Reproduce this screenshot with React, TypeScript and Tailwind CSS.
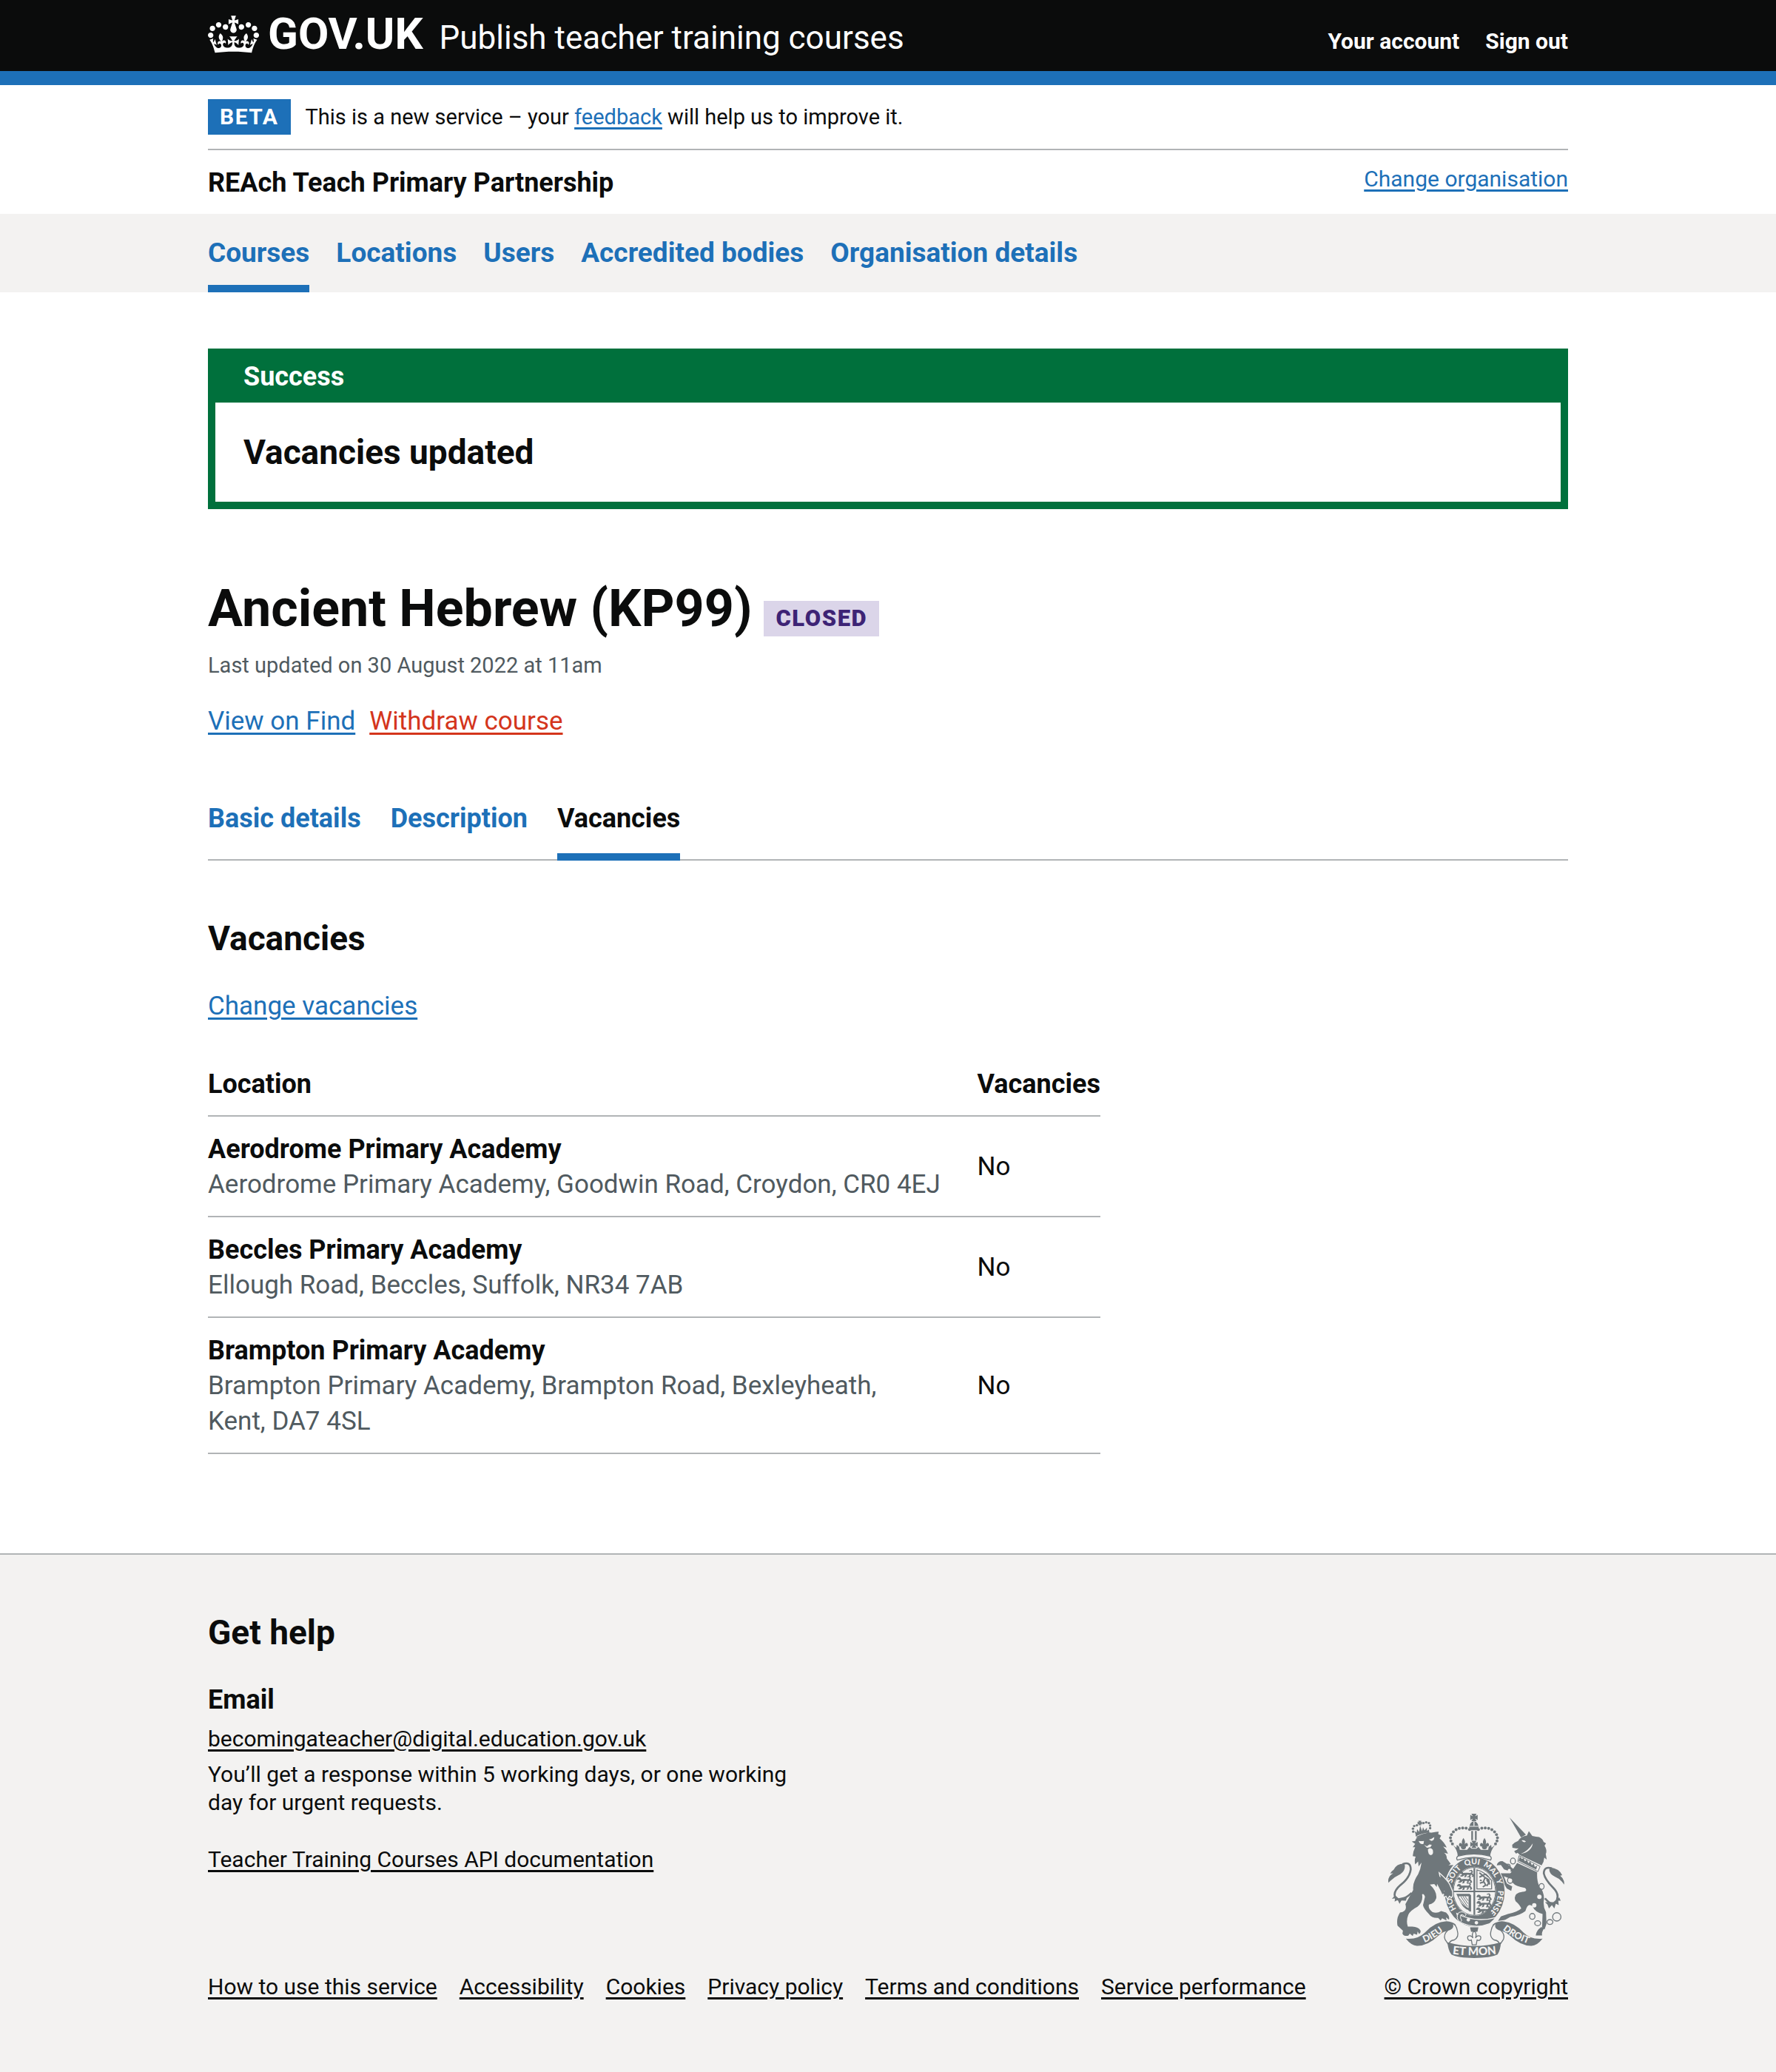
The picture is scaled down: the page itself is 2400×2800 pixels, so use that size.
import type { ReactNode } from "react";

const CONTAINER = "mx-auto w-full max-w-[1838px]";
const LINK = "underline decoration-[3px] underline-offset-[4px]";

const sections = ["Courses", "Locations", "Users", "Accredited bodies", "Organisation details"];
const tabs = ["Basic details", "Description", "Vacancies"];
const footerLinks = [
  "How to use this service",
  "Accessibility",
  "Cookies",
  "Privacy policy",
  "Terms and conditions",
  "Service performance",
];

const locations: { name: string; address: ReactNode; vacancies: string }[] = [
  {
    name: "Aerodrome Primary Academy",
    address: "Aerodrome Primary Academy, Goodwin Road, Croydon, CR0 4EJ",
    vacancies: "No",
  },
  { name: "Beccles Primary Academy", address: "Ellough Road, Beccles, Suffolk, NR34 7AB", vacancies: "No" },
  {
    name: "Brampton Primary Academy",
    address: (
      <>
        Brampton Primary Academy, Brampton Road, Bexleyheath, <span className="whitespace-nowrap">Kent, DA7 4SL</span>
      </>
    ),
    vacancies: "No",
  },
];

function Crown() {
  return (
    <svg aria-hidden="true" viewBox="0 0 132 97" className="h-[51px] w-[69px] shrink-0 self-center fill-white">
      <path
        fillRule="evenodd"
        d="M25 30.2c3.5 1.5 7.7-.2 9.1-3.7 1.5-3.6-.2-7.8-3.9-9.2-3.6-1.4-7.6.3-9.1 3.9-1.4 3.5.3 7.5 3.9 9zM9 39.5c3.6 1.5 7.8-.2 9.2-3.7 1.5-3.6-.2-7.8-3.9-9.1-3.6-1.5-7.6.2-9.1 3.8-1.4 3.5.3 7.5 3.8 9zM4.4 57.2c3.5 1.5 7.7-.2 9.1-3.8 1.5-3.6-.2-7.7-3.9-9.1-3.5-1.5-7.6.3-9.1 3.8-1.4 3.5.3 7.6 3.9 9.1zm38.3-21.4c3.5 1.5 7.7-.2 9.1-3.8 1.5-3.6-.2-7.7-3.9-9.1-3.6-1.5-7.6.3-9.1 3.8-1.3 3.6.4 7.7 3.9 9.1zm64.4-5.6c-3.6 1.5-7.8-.2-9.1-3.7-1.5-3.6.2-7.8 3.8-9.2 3.6-1.4 7.7.3 9.2 3.9 1.3 3.5-.4 7.5-3.9 9zm15.9 9.3c-3.6 1.5-7.7-.2-9.1-3.7-1.5-3.6.2-7.8 3.7-9.1 3.6-1.5 7.7.2 9.2 3.8 1.5 3.5-.3 7.5-3.8 9zm4.7 17.7c-3.6 1.5-7.8-.2-9.2-3.8-1.5-3.6.2-7.7 3.9-9.1 3.6-1.5 7.7.3 9.2 3.8 1.3 3.5-.4 7.6-3.9 9.1zM89.3 35.8c-3.6 1.5-7.8-.2-9.2-3.8-1.4-3.6.2-7.7 3.9-9.1 3.6-1.5 7.7.3 9.2 3.8 1.4 3.6-.3 7.7-3.9 9.1zM69.7 17.7l8.9 4.7V9.3l-8.9 2.8c-.2-.3-.5-.6-.9-.9L72.4 0H59.6l3.5 11.2c-.3.3-.6.5-.9.9l-8.8-2.8v13.1l8.8-4.7c.3.3.6.7.9.9l-5 15.4v.1c-.2.8-.4 1.6-.4 2.4 0 4.1 3.1 7.5 7 8.1h.2c.3 0 .7.1 1 .1.4 0 .7 0 1-.1h.2c4-.6 7.1-4.1 7.1-8.1 0-.8-.1-1.7-.4-2.4V34l-5.1-15.4c.4-.2.7-.6 1-.9zM66 92.8c16.9 0 32.8 1.1 47.1 3.2 4-16.9 8.9-26.7 14-33.5l-9.6-3.4c1 4.9 1.1 7.2 0 10.2-1.5-1.4-3-4.3-4.2-8.7L108.6 76c2.8-2 5-3.2 7.5-3.3-4.4 9.4-10 11.9-13.6 11.2-4.3-.8-6.3-4.6-5.6-7.9 1-4.7 5.7-5.9 8-.5 4.3-8.7-3-11.4-7.6-8.8 7.1-7.2 7.9-13.5 2.1-21.1-8 6.1-8.1 12.3-4.5 20.8-4.7-5.4-12.1-2.5-9.5 6.2 3.4-5.2 7.9-2 7.2 3.1-.6 4.3-6.4 7.8-13.5 7.2-10.3-.9-10.9-8-11.2-13.8 2.5-.5 7.1 1.8 11 7.3L80.2 60c-4.1 4.4-8 5.3-12.3 5.4 1.4-4.4 8-11.6 8-11.6H55.5s6.4 7.2 7.9 11.6c-4.2-.1-8-1-12.3-5.4l1.4 16.4c3.9-5.5 8.5-7.7 10.9-7.3-.3 5.8-.9 12.8-11.1 13.8-7.2.6-12.9-2.9-13.5-7.2-.7-5 3.8-8.3 7.1-3.1 2.7-8.7-4.6-11.6-9.4-6.2 3.7-8.5 3.6-14.7-4.6-20.8-5.8 7.6-5 13.9 2.2 21.1-4.7-2.6-11.9.1-7.7 8.8 2.3-5.5 7.1-4.2 8.1.5.7 3.3-1.3 7.1-5.7 7.9-3.5.7-9-1.8-13.5-11.2 2.5.1 4.7 1.3 7.5 3.3l-4.7-15.4c-1.2 4.4-2.7 7.2-4.3 8.7-1.1-3-.9-5.3 0-10.2l-9.5 3.4c5 6.9 9.9 16.7 14 33.5 14.8-2.1 30.8-3.2 47.7-3.2z"
      />
    </svg>
  );
}

const INK = "#6f777b";
const PAPER = "#f3f2f1";

const crownBeads = [
  [434, 127], [420, 122], [406, 121], [392, 123], [379, 128], [368, 137], [360, 148], [356, 161], [358, 174], [364, 186],
];
const lionCrownBeads = [
  [204, 136], [203, 124], [208, 113], [219, 110], [246, 101], [257, 98], [268, 101], [273, 111], [273, 122],
];
const chainLinks = [
  [611, 256, 10, 12], [591, 280, 9, 11], [600, 335, 11, 12], [728, 360, 10, 12], [690, 482, 11, 12], [712, 510, 12, 10],
  [762, 505, 12, 10], [790, 484, 17, 17],
];

function PassantLion({ x, y }: { x: number; y: number }) {
  return (
    <path
      transform={`translate(${x} ${y})`}
      d="M-2 8l4-7 6-2 6 3 2 5 14-1 14 1 6-3-2-6-8 2 1-4 10-2 5 7-3 7 4 3 4 8-5 4-6-1 4-5-6-4-3 9-8 2 2-4 2-6-10 0-3 9-9 2 3-5 1-6-9 7-8 1-3-4 8-3-4-6-6 1z"
    />
  );
}

function CrossPattee({ x, y, r }: { x: number; y: number; r: number }) {
  return (
    <path
      transform={`translate(${x} ${y}) scale(${r / 10})`}
      d="M-7-10H7L3-3l7-4V7L3 3l4 7H-7l4-7-7 4V-7l7 4z"
    />
  );
}

function Fleur({ x, y }: { x: number; y: number }) {
  return (
    <path
      transform={`translate(${x} ${y})`}
      d="M0-22c8 12 8 20 3 30 4-11 13-13 15-4 2 7-4 10-8 8 2 7-2 11-7 12H-3c-5-1-9-5-7-12-4 2-10-1-8-8 2-9 11-7 15 4-5-10-5-18 3-30z"
    />
  );
}

function RoyalArms() {
  return (
    <svg aria-hidden="true" viewBox="100 60 723 592" className="h-[196px] w-[240px]" fill={INK}>
      <defs>
        <path id="garter" d="M454 491A96 111 0 0 1 454 269A96 111 0 0 1 454 491" />
        <path id="motto-left" d="M226 597Q288 580 346 526" />
        <path id="motto-mid" d="M356 634Q453 648 552 634" />
        <path id="motto-right" d="M550 520Q614 578 696 600" />
      </defs>

      {/* lion: crown, tail, body */}
      {lionCrownBeads.map(([x, y]) => (
        <circle key={`${x}-${y}`} cx={x} cy={y} r="5" />
      ))}
      <CrossPattee x={231} y={101} r={9} />
      <path d="M214 148l-4-14 8 6 2-14 8 11 4-26 8 23 4-16 6 13 10-11v13l8-6 2 13q-32 2-56 16zM217 157q26-15 58-18l2 6q-32 4-58 18z" />
      <path
        d="M160 269Q194 256 194 290Q190 325 152 354Q116 386 134 410Q155 424 198 386"
        fill="none"
        stroke={INK}
        strokeWidth="8"
      />
      <path d="M103 345Q98 320 122 306L110 307Q116 296 124 292Q136 266 168 267Q176 292 152 309Q124 322 103 345zM130 396L117 410L130 408L128 422L141 415L148 431L156 417L174 418L180 400L144 408z" />
      <path d="M198 176L212 174L216 164Q250 143 298 137L308 136L306 146L318 152L312 164Q330 178 341 201L326 197Q340 210 346 226L330 222Q342 232 341 246Q350 258 357 268L348 274L368 272Q345 300 342 322Q350 360 368 392L362 406L352 398L346 410L338 398L328 403L326 392L314 388L330 376L322 362L312 354L302 346L300 362L290 350L272 352Q302 380 298 408Q290 430 268 434Q264 450 282 464Q300 472 318 460L338 466Q354 480 350 496L338 486L340 499L322 490L316 499L306 488Q280 490 268 472Q246 450 244 436L252 402Q248 388 240 392Q246 422 222 442Q192 458 184 475Q174 500 182 524L200 524Q225 525 234 540Q236 548 228 554L222 543L220 557L206 552L202 562L190 552L184 561Q166 564 160 552L162 540L140 520Q134 490 150 466Q182 462 172 432L204 374Q200 345 224 310Q234 290 238 262L226 278L224 258L212 270Q208 250 214 238L202 236Q204 215 212 200L202 200L212 186z" />
      <path
        d="M226 174q10 2 22 0l-2 12q-14 4-20-12zM268 168q12-2 22-10 0 14-12 16zM248 190l12 6 10-8 10 2-6 10-14 2zM264 208q10-10 20 2 4 20-8 22-12-2-12-24z"
        fill={PAPER}
      />

      {/* unicorn: horn, head, collar, body, tail, chain */}
      <path d="M597 78L664 148L644 160z" />
      <path d="M609 202L608 190Q616 180 632 174Q644 154 668 152L676 134L690 154Q706 158 718 158Q734 166 736 178L746 184L740 194Q752 212 745 228L749 250L739 242Q738 260 728 274L640 232L630 222L624 226L616 216L632 206z" />
      <path d="M646 172q10-4 18 4-8 8-18-4zM692 184q-4 34-50 44 32-14 50-44zM610 206l24-2-10 8z" fill={PAPER} />
      <path d="M636 234l86 44-9 21-82-41z" fill={PAPER} stroke={INK} strokeWidth="3" />
      <path d="M640 238l8 10 6-4 6 13 8-6 6 14 8-7 6 15 8-7 4 14 10-5-4 16-72-36z" />
      <path d="M628 264L710 302Q708 332 716 352Q738 380 738 410Q732 440 746 465L748 512L740 536L730 526L732 472Q702 466 690 440Q672 424 662 460Q640 478 600 484L580 496L550 500L562 482L590 472Q630 465 645 450Q640 435 622 420Q608 388 650 382Q674 378 660 366Q622 360 610 345L600 328L574 318L586 348L608 360L604 378L586 368L554 316L560 306L600 306L606 300L575 290L562 272L545 274Q548 256 568 256L590 270L612 288z" />
      <path d="M740 528Q726 548 730 560H704Q706 540 726 526z" />
      <path
        d="M770 286Q738 276 737 306Q742 332 776 366Q806 396 784 426Q768 440 742 408"
        fill="none"
        stroke={INK}
        strokeWidth="8"
      />
      <path d="M820 352Q822 330 804 316L812 314Q800 286 762 282Q752 304 782 320Q806 330 820 352zM800 404L806 418L796 418L798 436L786 430L780 450L770 436L758 450L752 434L742 424L776 424z" />
      <g fill="none" stroke={INK} strokeWidth="4">
        {chainLinks.map(([cx, cy, rx, ry]) => (
          <ellipse key={`${cx}-${cy}`} cx={cx} cy={cy} rx={rx} ry={ry} />
        ))}
      </g>
      <g fill={PAPER}>
        <circle cx="600" cy="335" r="8" />
        <circle cx="728" cy="360" r="8" />
        <circle cx="719" cy="402" r="9" />
        <circle cx="698" cy="437" r="9" />
        <circle cx="596" cy="294" r="6" />
      </g>

      {/* garter */}
      <ellipse cx="454" cy="382" rx="126" ry="146" fill={PAPER} />
      <ellipse cx="455" cy="382" rx="122" ry="142" />
      <ellipse cx="454" cy="380" rx="88" ry="100" fill={PAPER} />
      <ellipse cx="454" cy="380" rx="86" ry="98" fill="none" stroke={INK} strokeWidth="3" />
      <g fill={PAPER} className="font-['Lato',sans-serif] text-[32px] font-black" textAnchor="middle">
        <text><textPath href="#garter" startOffset="112">HO</textPath></text>
        <text><textPath href="#garter" startOffset="232">SOIT</textPath></text>
        <text><textPath href="#garter" startOffset="316">QUI</textPath></text>
        <text><textPath href="#garter" startOffset="396">MAL</textPath></text>
        <text><textPath href="#garter" startOffset="450">Y</textPath></text>
        <text><textPath href="#garter" startOffset="534">PENSE</textPath></text>
      </g>

      {/* quarters of the shield */}
      <path d="M450 284h7v192h-7zM368 377h172v6H368z" />
      <PassantLion x={392} y={298} />
      <PassantLion x={384} y={323} />
      <PassantLion x={384} y={350} />
      <PassantLion x={464} y={394} />
      <PassantLion x={464} y={420} />
      <PassantLion x={462} y={446} />
      <path d="M464 292q34 8 60 44v34h-60z" fill="none" stroke={INK} strokeWidth="4" />
      <path
        d="M474 304l12 10 12 10 14 8 4 20M486 314l14-4 10 10M486 316l-12 6M496 326l-6 16-14 4M492 340l8 14-12 8M504 332l8 14-8 12M476 334l8 2"
        fill="none"
        stroke={INK}
        strokeWidth="6"
      />
      <path d="M380 390h54l6 6v66q-8 2-12-6-20-8-30-30-8-16-18-36zm10 10q6 36 40 48v-48z" fillRule="evenodd" />
      <path d="M398 400l28 42M407 400l20 30M416 400l12 18M392 408l28 36" stroke={INK} strokeWidth="3" />

      {/* buckle and strap */}
      <path d="M382 470Q456 510 544 486L516 512Q456 536 392 504z" stroke={PAPER} strokeWidth="4" />
      <path d="M390 466q22-8 30 10l-6 6q-8-10-16-6-4 14 4 22l-6 8q-22-16-6-40z" stroke={PAPER} strokeWidth="3" />
      <circle cx="429" cy="496" r="7" fill={PAPER} />
      <circle cx="462" cy="508" r="7" fill={PAPER} />

      {/* forepaw over the garter */}
      <path
        d="M310 304Q352 340 358 364Q366 378 366 396L360 406L352 400L344 412L338 400L326 404L328 392L316 388L330 378L322 362z"
        stroke={PAPER}
        strokeWidth="4"
      />
      <path d="M300 312L336 336L332 376L324 392L300 346z" />

      {/* crown over the shield */}
      <path d="M380 228h144v24l-10 6Q454 226 390 258l-10-8z" fill={PAPER} />
      <CrossPattee x={452} y={78} r={15} />
      <path d="M434 113q4-18 18-18t18 18zM432 116h40l-4 14h-32zM441 133h7v38h-7zM456 133h7v38h-7z" />
      <path d="M450 96h4v17h-4z" fill={PAPER} />
      {crownBeads.map(([x, y]) => (
        <g key={`${x}-${y}`}>
          <circle cx={x} cy={y} r="6" />
          <circle cx={904 - x} cy={y} r="6" />
        </g>
      ))}
      <Fleur x={409} y={184} />
      <Fleur x={495} y={184} />
      <CrossPattee x={452} y={188} r={15} />
      <path d="M366 190l14 12 2-12 10 8 2 12h30l10-12 8 8h20l8-8 10 12h30l2-12 10-8 2 12 14-12q-18 24-20 46-66-18-132 0-2-26-20-46z" />
      <path d="M386 236q66-18 132 0 8 8 2 16-68-22-136 0-6-8 2-16z" fill="none" stroke={INK} strokeWidth="4" />

      {/* fleur-de-lis badge and motto ribbon */}
      <path d="M436 527h34l-4 18h-26z" />
      <path
        d="M453 540c10 12 10 20 5 30 6-12 22-12 22-1 0 10-8 14-15 9-2 6-2 12-4 20h-16c-2-8-2-14-4-20-7 5-15 1-15-9 0-11 16-11 22 1-5-10-5-18 5-30z"
        fill={PAPER}
        stroke={INK}
        strokeWidth="4"
      />
      <path d="M174 573Q222 578 252 548Q292 504 340 502Q364 504 378 516L366 544Q336 534 308 560Q264 602 222 602Q198 604 174 573z" />
      <path d="M732 573Q684 578 654 548Q614 504 566 502Q542 504 528 516L540 544Q570 534 598 560Q642 602 684 602Q708 604 732 573z" />
      <g fill={PAPER} stroke={INK} strokeWidth="4">
        <path d="M346 538Q326 556 334 576L350 600Q350 580 372 578Q392 566 384 540Q380 516 362 510Q374 530 346 538z" />
        <path d="M560 538Q580 556 572 576L556 600Q556 580 534 578Q514 566 522 540Q526 516 544 510Q532 530 560 538z" />
      </g>
      <path d="M344 588Q453 618 562 588Q560 620 548 638Q520 652 453 652Q386 652 360 638Q346 620 344 588z" />
      <g fill={PAPER} className="font-['Lato',sans-serif] font-black" textAnchor="middle">
        <text className="text-[38px]"><textPath href="#motto-left" startOffset="50%">DIEU</textPath></text>
        <text className="text-[46px]"><textPath href="#motto-mid" startOffset="50%">ET MON</textPath></text>
        <text className="text-[38px]"><textPath href="#motto-right" startOffset="50%">DROIT</textPath></text>
      </g>
    </svg>
  );
}

function Header() {
  return (
    <header className="border-b-[19px] border-[#1d70b8] bg-[#0b0c0c] text-white">
      <div className={`${CONTAINER} flex h-24 items-baseline pt-[17px]`}>
        <a href="#home" className="mr-[22px] flex items-baseline gap-[12px]">
          <Crown />
          <span className="text-[60px] leading-[58px] font-bold">GOV.UK</span>
        </a>
        <a href="#service" className="text-[44px] leading-[58px]">Publish teacher training courses</a>
        <nav aria-label="Account" className="ml-auto flex gap-[35px] text-[30px] leading-[38px] font-bold">
          <a href="#account">Your account</a>
          <a href="#sign-out">Sign out</a>
        </nav>
      </div>
    </header>
  );
}

export default function App() {
  return (
    <div className="flex min-h-screen flex-col bg-white font-['Roboto',sans-serif] text-[35px] leading-[48px] text-[#0b0c0c]">
      <Header />

      <div className={CONTAINER}>
        <div className="flex items-center gap-[20px] border-b-2 border-[#b1b4b6] py-[19px] text-[29px] leading-[38px]">
          <strong className="bg-[#1d70b8] px-4 py-[5px] text-[30px] font-bold tracking-wider text-white">BETA</strong>
          <p>
            This is a new service – your <a href="#feedback" className={`${LINK} text-[#1d70b8]`}>feedback</a> will help
            us to improve it.
          </p>
        </div>
        <div className="flex items-start justify-between pt-5 pb-[18px]">
          <p className="text-[36px] font-bold">REAch Teach Primary Partnership</p>
          <a href="#organisations" className={`${LINK} text-[30px] leading-[38px] text-[#1d70b8]`}>Change organisation</a>
        </div>
      </div>

      <nav aria-label="Main" className="bg-[#f3f2f1]">
        <ul className={`${CONTAINER} flex gap-9 text-[37px] font-bold text-[#1d70b8]`}>
          {sections.map((label, i) => (
            <li
              key={label}
              className={`border-b-[10px] pt-[29px] pb-[19px] ${i === 0 ? "border-[#1d70b8]" : "border-transparent"}`}
            >
              <a href="#section">{label}</a>
            </li>
          ))}
        </ul>
      </nav>

      <main className={`${CONTAINER} pt-[76px] pb-[134px]`}>
        <section aria-labelledby="banner-title" className="border-[10px] border-[#00703c]">
          <h2 id="banner-title" className="bg-[#00703c] px-[38px] pt-[4px] pb-[11px] text-[36px] font-bold text-white">
            Success
          </h2>
          <p className="p-[38px] text-[46px] leading-[58px] font-bold">Vacancies updated</p>
        </section>

        <h1 className="mt-[86px] flex items-baseline gap-4 text-[70px] leading-[96px] font-bold">
          Ancient Hebrew (KP99)
          <strong className="bg-[#dbd5e9] px-4 py-[5px] text-[31px] leading-[38px] tracking-wider text-[#3d2375]">
            CLOSED
          </strong>
        </h1>
        <p className="mt-[10px] text-[29px] leading-[38px] text-[#505a5f]">Last updated on 30 August 2022 at 11am</p>
        <p className="mt-[33px] flex gap-[19px]">
          <a href="#find" className={`${LINK} text-[#1d70b8]`}>View on Find</a>
          <a href="#withdraw" className={`${LINK} text-[#d4351c]`}>Withdraw course</a>
        </p>

        <nav aria-label="Course" className="mt-[83px] border-b-2 border-[#b1b4b6]">
          <ul className="-mb-[2px] flex gap-10 text-[36px] font-bold text-[#1d70b8]">
            {tabs.map((label) => (
              <li
                key={label}
                className={`border-b-[10px] pb-[23px] ${label === "Vacancies" ? "border-[#1d70b8] text-[#0b0c0c]" : "border-transparent"}`}
              >
                <a href="#tab">{label}</a>
              </li>
            ))}
          </ul>
        </nav>

        <h2 className="mt-[76px] text-[46px] leading-[58px] font-bold">Vacancies</h2>
        <p className="mt-[39px]">
          <a href="#vacancies" className={`${LINK} text-[#1d70b8]`}>Change vacancies</a>
        </p>

        <table className="mt-[37px] w-full max-w-[1206px] border-collapse text-left">
          <thead className="text-[36px]">
            <tr className="border-b-2 border-[#b1b4b6]">
              <th scope="col" className="pt-5 pr-[38px] pb-[18px] font-bold">Location</th>
              <th scope="col" className="w-[164px] pt-5 pb-[18px] font-bold">Vacancies</th>
            </tr>
          </thead>
          <tbody>
            {locations.map((l) => (
              <tr key={l.name} className="border-b-2 border-[#b1b4b6]">
                <td className="pt-5 pr-[38px] pb-[18px]">
                  <strong className="block text-[36px] font-bold">{l.name}</strong>
                  <span className="block text-[#505a5f]">{l.address}</span>
                </td>
                <td className="pt-5 pb-[18px]">{l.vacancies}</td>
              </tr>
            ))}
          </tbody>
        </table>
      </main>

      <footer className="grow border-t-2 border-[#b1b4b6] bg-[#f3f2f1] pt-[76px] pb-20 text-[30px] leading-[38px]">
        <div className={`${CONTAINER} flex items-end justify-between`}>
          <div>
            <h2 className="text-[46px] leading-[58px] font-bold">Get help</h2>
            <h3 className="mt-[38px] text-[36px] leading-[48px] font-bold">Email</h3>
            <p className="mt-[10px]">
              <a href="mailto:becomingateacher@digital.education.gov.uk" className={LINK}>
                becomingateacher@digital.education.gov.uk
              </a>
            </p>
            <p className="mt-[10px] max-w-[800px]">
              You’ll get a response within 5 working days, or one working day for urgent requests.
            </p>
            <p className="mt-[39px]">
              <a href="#api" className={LINK}>Teacher Training Courses API documentation</a>
            </p>
            <ul className="mt-[134px] flex gap-[30px]">
              {footerLinks.map((label) => (
                <li key={label}>
                  <a href="#footer" className={LINK}>{label}</a>
                </li>
              ))}
            </ul>
          </div>
          <a href="#copyright" className={`${LINK} flex flex-col items-center gap-5`}>
            <RoyalArms />
            <span>© Crown copyright</span>
          </a>
        </div>
      </footer>
    </div>
  );
}
